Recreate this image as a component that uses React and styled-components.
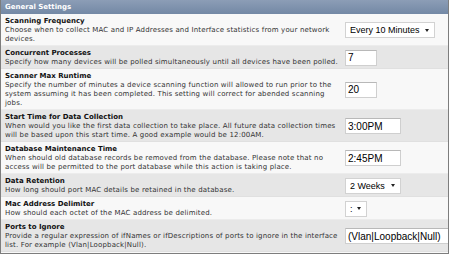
import React from 'react';
import styled, { createGlobalStyle } from 'styled-components';

const GlobalStyle = createGlobalStyle`
  html, body {
    margin: 0;
    padding: 0;
    background: #ffffff;
  }
  * {
    box-sizing: border-box;
  }
`;

const settings = [
  {
    title: 'Scanning Frequency',
    desc: 'Choose when to collect MAC and IP Addresses and Interface statistics from your network devices.',
    control: { kind: 'select', value: 'Every 10 Minutes', width: 90 },
  },
  {
    title: 'Concurrent Processes',
    desc: 'Specify how many devices will be polled simultaneously until all devices have been polled.',
    control: { kind: 'input', value: '7', width: 32 },
  },
  {
    title: 'Scanner Max Runtime',
    desc: 'Specify the number of minutes a device scanning function will allowed to run prior to the system assuming it has been completed. This setting will correct for abended scanning jobs.',
    control: { kind: 'input', value: '20', width: 32 },
  },
  {
    title: 'Start Time for Data Collection',
    desc: 'When would you like the first data collection to take place. All future data collection times will be based upon this start time. A good example would be 12:00AM.',
    control: { kind: 'input', value: '3:00PM', width: 56 },
  },
  {
    title: 'Database Maintenance Time',
    desc: 'When should old database records be removed from the database. Please note that no access will be permitted to the port database while this action is taking place.',
    control: { kind: 'input', value: '2:45PM', width: 56 },
  },
  {
    title: 'Data Retention',
    desc: 'How long should port MAC details be retained in the database.',
    control: { kind: 'select', value: '2 Weeks', width: 56 },
  },
  {
    title: 'Mac Address Delimiter',
    desc: 'How should each octet of the MAC address be delimited.',
    control: { kind: 'select', value: ':', width: 22 },
  },
  {
    title: 'Ports to Ignore',
    desc: 'Provide a regular expression of ifNames or ifDescriptions of ports to ignore in the interface list. For example (Vlan|Loopback|Null).',
    control: { kind: 'input', value: '(Vlan|Loopback|Null)', width: 104 },
  },
];

function App() {
  return (
    <>
      <GlobalStyle />
      <Panel>
        <Header>General Settings</Header>
        {settings.map((s, i) => (
          <Row key={s.title} $alt={i % 2 === 1}>
            <Label>
              <Title>{s.title}</Title>
              <Desc>{s.desc}</Desc>
            </Label>
            <Control>
              {s.control.kind === 'select' ? (
                <SelectBox $w={s.control.width}>
                  <span>{s.control.value}</span>
                  <Caret />
                </SelectBox>
              ) : (
                <TextInput $w={s.control.width} defaultValue={s.control.value} />
              )}
            </Control>
          </Row>
        ))}
      </Panel>
    </>
  );
}

const Panel = styled.div`
  width: 449px;
  height: 254px;
  border: 1px solid #7d7d7d;
  border-top: none;
  background: #f8f8f8;
  overflow: hidden;
  font-family: "DejaVu Sans", Verdana, sans-serif;
`;

const Header = styled.div`
  height: 14px;
  line-height: 14px;
  padding-left: 4px;
  background: linear-gradient(#8c9db6, #7388a5);
  color: #ffffff;
  font-size: 7px;
  font-weight: bold;
`;

const Row = styled.div`
  display: grid;
  grid-template-columns: 1fr 107px;
  align-items: center;
  padding: 2px 0 1px 4px;
  background: ${(p) => (p.$alt ? '#e6e6e6' : '#f8f8f8')};
  border-bottom: 1px solid ${(p) => (p.$alt ? '#e0e0e0' : '#ececec')};
`;

const Label = styled.div`
  min-width: 0;
`;

const Title = styled.div`
  font-size: 7px;
  line-height: 10px;
  font-weight: bold;
  color: #111111;
`;

const Desc = styled.div`
  font-size: 7px;
  line-height: 9px;
  letter-spacing: 0.16px;
  color: #333333;
`;

const Control = styled.div`
  display: flex;
  align-items: center;
  padding-left: 4px;
`;

const TextInput = styled.input`
  width: ${(p) => p.$w}px;
  height: 16px;
  padding: 0 2px;
  border: 1px solid #cfcfcf;
  border-top-color: #b8b8b8;
  background: #ffffff;
  font-family: "Liberation Sans", Arial, sans-serif;
  font-size: 10px;
  color: #000000;
  outline: none;
`;

const SelectBox = styled.div`
  width: ${(p) => p.$w}px;
  height: 16px;
  display: flex;
  align-items: center;
  justify-content: space-between;
  padding: 0 5px 0 4px;
  border: 1px solid #d2d2d2;
  background: #ffffff;
  font-family: "Liberation Sans", Arial, sans-serif;
  font-size: 9px;
  color: #000000;
  white-space: nowrap;
`;

const Caret = styled.span`
  width: 0;
  height: 0;
  border-left: 2.5px solid transparent;
  border-right: 2.5px solid transparent;
  border-top: 3px solid #222222;
  margin-left: 4px;
`;

export default App;
